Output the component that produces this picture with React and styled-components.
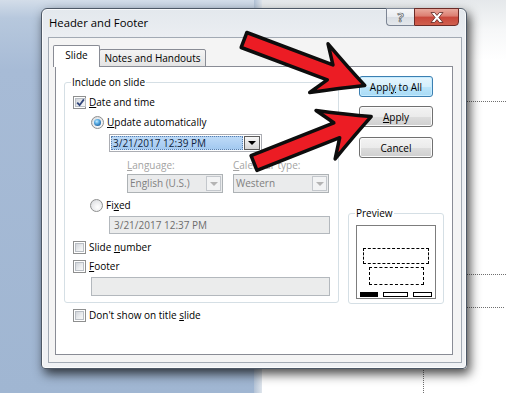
import React from "react";
import styled, { createGlobalStyle } from "styled-components";

const GlobalStyle = createGlobalStyle`
  html, body { margin: 0; padding: 0; }
  body { font-family: "Open Sans", "Noto Sans", sans-serif; font-size: 10px; color: #000; }
`;

const Screen = styled.div`
  position: relative;
  width: 506px;
  height: 393px;
  overflow: hidden;
  display: flex;
`;

const ThumbPane = styled.div`
  width: 254px;
  background: linear-gradient(180deg, #d3dde9 0px, #b7c8dd 18px, #a7bbd6 70px, #a0b6d2 100%);
`;

const Splitter = styled.div`
  width: 8px;
  background: linear-gradient(90deg, #b2c2d6, #dfe5ec);
`;

const SlideArea = styled.div`
  position: relative;
  flex: 1;
  background: linear-gradient(180deg, #e5e8eb 0px, #f6f7f8 30px, #ffffff 60px);
`;

const GuideH = styled.div`
  position: absolute;
  left: ${(p) => p.$x}px;
  top: ${(p) => p.$y}px;
  width: ${(p) => p.$w}px;
  border-top: 1px dotted #6f6f6f;
`;

const GuideV = styled.div`
  position: absolute;
  left: ${(p) => p.$x}px;
  top: ${(p) => p.$y}px;
  height: ${(p) => p.$h}px;
  border-left: 1px dotted #6f6f6f;
`;

const Window = styled.div`
  position: absolute;
  left: 41px;
  top: 8px;
  width: 426px;
  height: 361px;
  box-sizing: border-box;
  border: 1px solid #4d5866;
  border-radius: 6px 6px 4px 4px;
  background: linear-gradient(180deg, #e3e8ed 0px, #ebeef2 28px, #eff1f4 100%);
  box-shadow: 3px 5px 11px rgba(0, 0, 0, 0.72), inset 0 0 0 1px rgba(255, 255, 255, 0.75);
  display: flex;
  flex-direction: column;
  padding: 0 4px 5px 6px;
`;

const TitleBar = styled.div`
  height: 28px;
  display: flex;
  align-items: flex-start;
`;

const Title = styled.span`
  margin: 6px 0 0 1px;
  font-size: 11.3px;
  line-height: 16px;
  color: #000;
  flex: 1;
`;

const CaptionButton = styled.div`
  height: 18px;
  margin-top: -1px;
  box-sizing: border-box;
  display: flex;
  align-items: center;
  justify-content: center;
`;

const HelpButton = styled(CaptionButton)`
  width: 28px;
  border: 1px solid #7c8594;
  border-right: none;
  border-radius: 0 0 0 4px;
  background: linear-gradient(180deg, #f6f7f9 0%, #e9ecf0 50%, #d9dee4 51%, #e4e8ec 100%);
  font-size: 13px;
  font-weight: 700;
  color: #f3f3f3;
  -webkit-text-stroke: 0.7px #5a5f66;
`;

const CloseButton = styled(CaptionButton)`
  width: 45px;
  margin-right: 3px;
  border: 1px solid #6b2b27;
  border-radius: 0 0 4px 0;
  background: linear-gradient(180deg, #e9a99d 0%, #dc7d70 45%, #c8473b 50%, #d0604f 100%);
`;

const Client = styled.div`
  flex: 1;
  display: flex;
  flex-direction: column;
  border: 1px solid #a2aab4;
  background: #f4f4f4;
  padding: 7px 8px 7px 6px;
`;

const TabStrip = styled.div`
  display: flex;
  align-items: flex-end;
  height: 22px;
  margin: 0 0 -1px -2px;
  position: relative;
  z-index: 1;
`;

const Tab = styled.div`
  box-sizing: border-box;
  width: ${(p) => p.$w}px;
  height: ${(p) => (p.$active ? 22 : 18)}px;
  margin-left: ${(p) => (p.$active ? 0 : -1)}px;
  border: 1px solid #898c95;
  border-bottom: ${(p) => (p.$active ? "none" : "1px solid #898c95")};
  border-radius: 2px 2px 0 0;
  background: ${(p) => (p.$active ? "#ffffff" : "linear-gradient(180deg, #f4f4f4, #e4e4e4)")};
  display: flex;
  align-items: ${(p) => (p.$active ? "flex-start" : "center")};
  justify-content: center;
  padding-top: ${(p) => (p.$active ? 2 : 0)}px;
  line-height: 14px;
`;

const TabPage = styled.div`
  flex: 1;
  display: flex;
  border: 1px solid #898c95;
  background: #ffffff;
  padding: 0 6px 0 8px;
`;

const LeftColumn = styled.div`
  width: 275px;
  padding-top: 15px;
  display: flex;
  flex-direction: column;
`;

const RightColumn = styled.div`
  width: 96px;
  margin-left: 9px;
  display: flex;
  flex-direction: column;
  align-items: center;
  padding-top: 9px;
`;

const Group = styled.div`
  position: relative;
  box-sizing: border-box;
  width: 100%;
  border: 1px solid #d5dfe5;
  border-radius: 3px;
  padding: ${(p) => p.$pad};
  margin-top: ${(p) => p.$top || 0}px;
  height: ${(p) => (p.$h ? `${p.$h}px` : "auto")};
  display: flex;
  flex-direction: column;
`;

const GroupCaption = styled.span`
  position: absolute;
  top: -8px;
  left: 6px;
  padding: 0 1px;
  background: #ffffff;
  line-height: 14px;
`;

const OptionRow = styled.div`
  display: flex;
  align-items: center;
  gap: 3px;
  height: 13px;
  margin-top: ${(p) => p.$top || 0}px;
  margin-left: ${(p) => p.$indent || 0}px;
  line-height: 13px;
  white-space: nowrap;
`;

const FieldRow = styled.div`
  display: flex;
  gap: 10px;
  margin-top: ${(p) => p.$top || 0}px;
  margin-left: ${(p) => p.$indent || 0}px;
`;

const DimLabel = styled.span`
  width: 96px;
  height: 13px;
  line-height: 13px;
  color: #a3a3a3;
`;

const Key = styled.span`
  text-decoration: underline;
  text-underline-offset: 1px;
`;

const Box = styled.span`
  box-sizing: border-box;
  width: 13px;
  height: 13px;
  flex: none;
  border: 1px solid #8e8f8f;
  background: #ffffff;
  padding: 1px;
  display: flex;
`;

const BoxInner = styled.span`
  flex: 1;
  border: 1px solid #b9bec4;
  background: linear-gradient(135deg, #d2d5da 0%, #eceef0 60%, #f8f8f8 100%);
  display: flex;
  align-items: center;
  justify-content: center;
`;

const Radio = styled.span`
  box-sizing: border-box;
  width: 13px;
  height: 13px;
  flex: none;
  border-radius: 50%;
  border: 1px solid #8e8f8f;
  background: radial-gradient(circle at 60% 65%, #ffffff 0%, #e9eaec 55%, #cfd2d6 100%);
  display: flex;
  align-items: center;
  justify-content: center;
`;

const RadioDot = styled.span`
  width: 7px;
  height: 7px;
  border-radius: 50%;
  background: radial-gradient(circle at 40% 35%, #c8ecff 0%, #5db0e6 35%, #1c5f9e 80%, #174a7c 100%);
`;

const DateCombo = styled.div`
  box-sizing: border-box;
  width: 153px;
  height: 18px;
  margin: 5px 0 0 36px;
  border: 1px solid #abadb3;
  padding: 1px;
  display: flex;
  background: #ffffff;
`;

const Selection = styled.div`
  flex: 1;
  background: linear-gradient(180deg, #bddaf7, #a3c9f0);
  border: 1px dotted #5a7fae;
  color: #0e1f3d;
  line-height: 12px;
  padding-left: 1px;
  white-space: nowrap;
`;

const DropButton = styled.div`
  box-sizing: border-box;
  width: 16px;
  margin-left: 1px;
  border: 1px solid #5c5c5c;
  background: linear-gradient(180deg, #f6f6f6, #d6d6d6);
  display: flex;
  align-items: center;
  justify-content: center;
`;

const Triangle = styled.span`
  width: 0;
  height: 0;
  border-left: 4px solid transparent;
  border-right: 4px solid transparent;
  border-top: 4px solid ${(p) => (p.$dim ? "#b4b4b4" : "#000000")};
`;

const DimCombo = styled.div`
  box-sizing: border-box;
  width: 96px;
  height: 19px;
  border: 1px solid #adb2b5;
  background: #eaebec;
  display: flex;
  align-items: center;
  padding: 1px 1px 1px 2px;
  color: #7f7f7f;
  white-space: nowrap;
`;

const ComboText = styled.span`
  flex: 1;
  line-height: 15px;
`;

const DimDrop = styled.div`
  box-sizing: border-box;
  width: 15px;
  height: 15px;
  border: 1px solid #c3c7cc;
  background: #f2f3f4;
  display: flex;
  align-items: center;
  justify-content: center;
`;

const TextBox = styled.div`
  box-sizing: border-box;
  width: ${(p) => p.$w}px;
  height: ${(p) => p.$h}px;
  margin-top: ${(p) => p.$top}px;
  margin-left: ${(p) => p.$indent}px;
  border: 1px solid #b3b8bd;
  background: #ebecec;
  color: #6d6d6d;
  line-height: ${(p) => p.$h - 2}px;
  padding-left: 4px;
`;

const Button = styled.div`
  box-sizing: border-box;
  width: 74px;
  height: 21px;
  margin-top: ${(p) => p.$top || 0}px;
  border: 1px solid ${(p) => (p.$hot ? "#3c7fb1" : "#707070")};
  border-radius: 3px;
  background: ${(p) =>
    p.$hot
      ? "linear-gradient(180deg, #e5f5fd 0%, #d4effc 50%, #bce5fa 51%, #a8dbf6 100%)"
      : "linear-gradient(180deg, #f3f3f3 0%, #ebebeb 50%, #dddddd 51%, #cfcfcf 100%)"};
  box-shadow: inset 0 0 0 1px ${(p) => (p.$hot ? "#c6ecff" : "#fbfbfb")};
  display: flex;
  align-items: center;
  justify-content: center;
  line-height: 14px;
`;

const PreviewPage = styled.div`
  box-sizing: border-box;
  width: 80px;
  height: 74px;
  border: 1px solid #7d7d7d;
  background: #ffffff;
  display: flex;
  flex-direction: column;
  align-items: center;
  padding: 22px 0 1px;
`;

const Placeholder = styled.div`
  box-sizing: border-box;
  width: ${(p) => p.$w}px;
  height: ${(p) => p.$h}px;
  margin-top: ${(p) => p.$top || 0}px;
  border: 1px dashed #000000;
`;

const FooterBars = styled.div`
  margin-top: auto;
  display: flex;
  gap: 5px;
`;

const Bar = styled.div`
  box-sizing: border-box;
  width: ${(p) => p.$w}px;
  height: 5px;
  border: 1px solid #000000;
  background: ${(p) => (p.$fill ? "#000000" : "#ffffff")};
`;

const ArrowLayer = styled.svg`
  position: absolute;
  left: 0;
  top: 0;
  pointer-events: none;
`;

const CheckBox = ({ checked }) => (
  <Box>
    <BoxInner>
      {checked && (
        <svg width="9" height="9" viewBox="0 0 9 9">
          <path d="M1.2 4.6 L3.6 7.2 L7.9 1.4" fill="none" stroke="#31457a" strokeWidth="1.8" />
        </svg>
      )}
    </BoxInner>
  </Box>
);

const RadioButton = ({ selected }) => <Radio>{selected && <RadioDot />}</Radio>;

const arrowPath = (L) =>
  `M0,-8 L${L - 37},-8 L${L - 49},-26 Q${L - 22},-11 ${L},0 Q${L - 22},11 ${L - 49},26 L${L - 37},8 L0,8 Z`;

const App = () => {
  return (
    <>
      <GlobalStyle />
      <Screen>
        <ThumbPane />
        <Splitter />
        <SlideArea>
          <GuideH $x={204} $y={101} $w={40} />
          <GuideH $x={204} $y={274} $w={40} />
          <GuideH $x={204} $y={307} $w={38} />
          <GuideV $x={161} $y={366} $h={27} />
        </SlideArea>

        <Window>
          <TitleBar>
            <Title>Header and Footer</Title>
            <HelpButton>?</HelpButton>
            <CloseButton>
              <svg width="14" height="11" viewBox="0 0 14 11">
                <path
                  d="M1,0.5 H4.6 L7,3.4 L9.4,0.5 H13 L8.9,5.5 L13,10.5 H9.4 L7,7.6 L4.6,10.5 H1 L5.1,5.5 Z"
                  fill="#ffffff"
                  stroke="#5b2420"
                  strokeWidth="0.8"
                />
              </svg>
            </CloseButton>
          </TitleBar>

          <Client>
            <TabStrip>
              <Tab $active $w={47}>Slide</Tab>
              <Tab $w={107}>Notes and Handouts</Tab>
            </TabStrip>
            <TabPage>
              <LeftColumn>
                <Group $pad="13px 0 6px 8px">
                  <GroupCaption>Include on slide</GroupCaption>
                  <OptionRow>
                    <CheckBox checked />
                    <span>
                      <Key>D</Key>ate and time
                    </span>
                  </OptionRow>
                  <OptionRow $top={7} $indent={18}>
                    <RadioButton selected />
                    <span>
                      <Key>U</Key>pdate automatically
                    </span>
                  </OptionRow>
                  <DateCombo>
                    <Selection>3/21/2017 12:39 PM</Selection>
                    <DropButton>
                      <Triangle />
                    </DropButton>
                  </DateCombo>
                  <FieldRow $top={7} $indent={54}>
                    <DimLabel>
                      <Key>L</Key>anguage:
                    </DimLabel>
                    <DimLabel>
                      <Key>C</Key>alendar type:
                    </DimLabel>
                  </FieldRow>
                  <FieldRow $top={2} $indent={54}>
                    <DimCombo>
                      <ComboText>English (U.S.)</ComboText>
                      <DimDrop>
                        <Triangle $dim />
                      </DimDrop>
                    </DimCombo>
                    <DimCombo>
                      <ComboText>Western</ComboText>
                      <DimDrop>
                        <Triangle $dim />
                      </DimDrop>
                    </DimCombo>
                  </FieldRow>
                  <OptionRow $top={6} $indent={17}>
                    <RadioButton />
                    <span>
                      Fi<Key>x</Key>ed
                    </span>
                  </OptionRow>
                  <TextBox $w={221} $h={18} $top={4} $indent={36}>
                    3/21/2017 12:37 PM
                  </TextBox>
                  <OptionRow $top={7}>
                    <CheckBox />
                    <span>
                      Slide <Key>n</Key>umber
                    </span>
                  </OptionRow>
                  <OptionRow $top={6}>
                    <CheckBox />
                    <span>
                      <Key>F</Key>ooter
                    </span>
                  </OptionRow>
                  <TextBox $w={239} $h={19} $top={4} $indent={18} />
                </Group>
                <OptionRow $top={6} $indent={9}>
                  <CheckBox />
                  <span>
                    Don't show on title <Key>s</Key>lide
                  </span>
                </OptionRow>
              </LeftColumn>

              <RightColumn>
                <Button $hot>
                  <span>
                    Appl<Key>y</Key> to All
                  </span>
                </Button>
                <Button $top={9}>
                  <span>
                    <Key>A</Key>pply
                  </span>
                </Button>
                <Button $top={10}>Cancel</Button>
                <Group $pad="11px 0 0 7px" $h={91} $top={55}>
                  <GroupCaption>Preview</GroupCaption>
                  <PreviewPage>
                    <Placeholder $w={66} $h={16} />
                    <Placeholder $w={55} $h={18} $top={3} />
                    <FooterBars>
                      <Bar $w={18} $fill />
                      <Bar $w={25} />
                      <Bar $w={19} />
                    </FooterBars>
                  </PreviewPage>
                </Group>
              </RightColumn>
            </TabPage>
          </Client>
        </Window>

        <ArrowLayer width="506" height="393" viewBox="0 0 506 393">
          <path
            d={arrowPath(129)}
            transform="translate(244 40) rotate(20.6)"
            fill="#ec1c24"
            stroke="#0d0d0d"
            strokeWidth="3.5"
            strokeLinejoin="round"
          />
          <path
            d={arrowPath(126)}
            transform="translate(254 163) rotate(-21.6)"
            fill="#ec1c24"
            stroke="#0d0d0d"
            strokeWidth="3.5"
            strokeLinejoin="round"
          />
        </ArrowLayer>
      </Screen>
    </>
  );
};

export default App;
